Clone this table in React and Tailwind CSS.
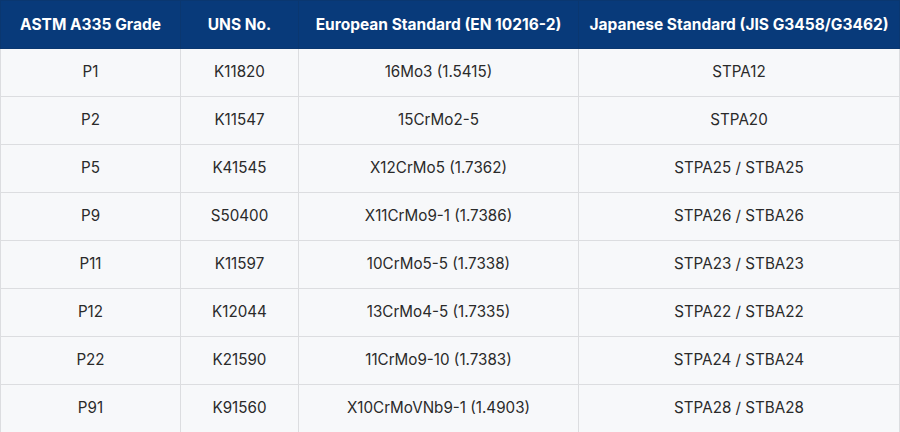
const rows = [
  ["P1", "K11820", "16Mo3 (1.5415)", "STPA12"],
  ["P2", "K11547", "15CrMo2-5", "STPA20"],
  ["P5", "K41545", "X12CrMo5 (1.7362)", "STPA25 / STBA25"],
  ["P9", "S50400", "X11CrMo9-1 (1.7386)", "STPA26 / STBA26"],
  ["P11", "K11597", "10CrMo5-5 (1.7338)", "STPA23 / STBA23"],
  ["P12", "K12044", "13CrMo4-5 (1.7335)", "STPA22 / STBA22"],
  ["P22", "K21590", "11CrMo9-10 (1.7383)", "STPA24 / STBA24"],
  ["P91", "K91560", "X10CrMoVNb9-1 (1.4903)", "STPA28 / STBA28"],
];

const heads = [
  "ASTM A335 Grade",
  "UNS No.",
  "European Standard (EN 10216-2)",
  "Japanese Standard (JIS G3458/G3462)",
];

export default function App() {
  return (
    <div className="w-[900px] h-[432px] bg-white overflow-hidden" style={{ fontFamily: "Inter, 'Open Sans', sans-serif" }}>
      <table className="w-full table-fixed border-collapse text-center">
        <colgroup>
          <col className="w-[180px]" />
          <col className="w-[118px]" />
          <col className="w-[280px]" />
          <col />
        </colgroup>
        <thead>
          <tr className="bg-[#083a7a] text-white h-[48px]">
            {heads.map((h) => (
              <th key={h} className="border border-[#0a3770] text-[15.5px] font-bold px-1 whitespace-nowrap">
                {h}
              </th>
            ))}
          </tr>
        </thead>
        <tbody>
          {rows.map((r) => (
            <tr key={r[0]} className="bg-[#f7f8fa] h-[48px]">
              {r.map((c, i) => (
                <td key={i} className="border border-[#dcdde0] text-[15.2px] text-[#2a2a2a] px-2">
                  {c}
                </td>
              ))}
            </tr>
          ))}
        </tbody>
      </table>
    </div>
  );
}
